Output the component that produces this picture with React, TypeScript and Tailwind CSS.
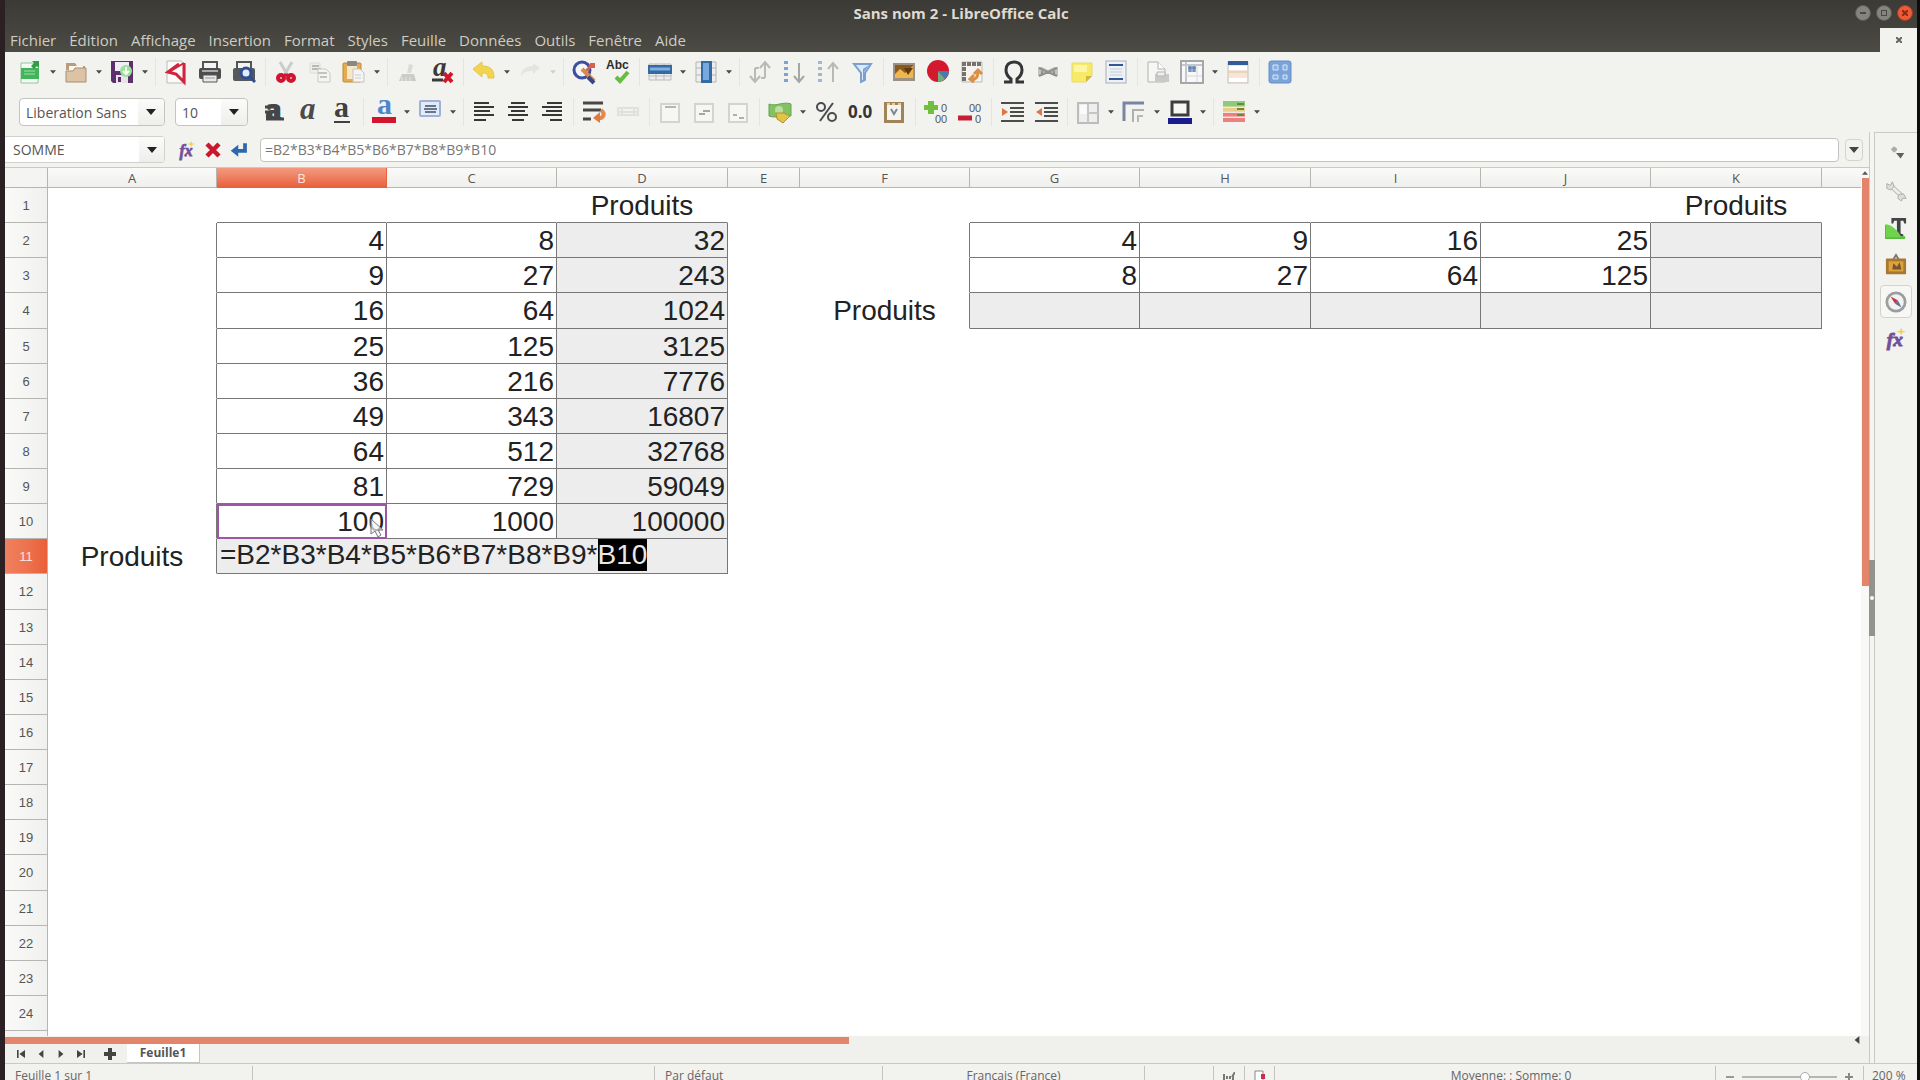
import React from 'react';
import clsx from 'clsx';

type IconName = keyof typeof icons;

type Tool =
  | { kind: 'icon'; icon: IconName; label: string; menu?: boolean; faded?: boolean }
  | { kind: 'separator' };

const tool = (icon: IconName, label: string, menu = false, faded = false): Tool => ({
  kind: 'icon', icon, label, menu, faded,
});
const separator: Tool = { kind: 'separator' };

// All drawings share a 24 x 24 grid
const icons = {
  newSheet: (
    <>
      <path d="M3 3h12l5 3v17H3z" fill="#f4fbf4" stroke="#8fc79a" />
      <rect x="3" y="8" width="18" height="11" fill="#43b45b" />
      <path d="M6 11h11M6 14h11" stroke="#9ee0ab" />
      <path d="M14 1h7v7l-2-2-3 3-3-3 3-3z" fill="#2f9e44" />
    </>
  ),
  open: (
    <>
      <path d="M2 3h9l2 3h8v4H2z" fill="#b79c7f" />
      <path d="M5 6h14v8H5z" fill="#faf6f0" />
      <path d="M2 11h7l2-3h11v14H2z" fill="#dcc3a3" stroke="#a98e70" />
    </>
  ),
  save: (
    <>
      <path d="M1 1h22v22H3l-2-2z" fill="#5d2f6d" />
      <rect x="5" y="2" width="14" height="9" fill="#f3eef5" />
      <rect x="6" y="15" width="12" height="8" fill="#e8e2ea" />
      <rect x="8" y="17" width="3" height="5" fill="#5d2f6d" />
      <circle cx="16" cy="11" r="6" fill="#9be09b" />
      <path d="M16 7v6m-3-2 3 3 3-3" stroke="#f4fff4" strokeWidth="2" fill="none" />
    </>
  ),
  pdf: (
    <>
      <path d="M3 1h14l4 4v18H3z" fill="#fafafa" stroke="#bbb" />
      <path d="M20 3v19L12 14 4 12 15 4" fill="none" stroke="#d2233c" strokeWidth="3" />
      <path d="M5 12 20 3" stroke="#d2233c" strokeWidth="2" />
    </>
  ),
  print: (
    <>
      <path d="M5 2h14v7H5z" fill="#f3f3f3" stroke="#555" strokeWidth="2" />
      <rect x="1" y="8" width="22" height="11" rx="2" fill="#4b4d4e" />
      <path d="M4 11h16" stroke="#aaa" strokeWidth="2" />
      <path d="M5 15h14v7H5z" fill="#e9e9e9" stroke="#555" />
      <path d="M7 18h10" stroke="#999" />
    </>
  ),
  preview: (
    <>
      <path d="M5 2h14v7H5z" fill="#f3f3f3" stroke="#555" strokeWidth="2" />
      <rect x="1" y="8" width="22" height="13" rx="2" fill="#55585c" />
      <circle cx="14" cy="13" r="5" fill="#e2ecfa" stroke="#304f91" strokeWidth="3" />
      <path d="m18 17 5 5" stroke="#304f91" strokeWidth="3" />
    </>
  ),
  cut: (
    <>
      <path d="m6 2 7 12M18 2l-7 12" stroke="#cbcccb" strokeWidth="3" />
      <circle cx="7" cy="18" r="3" fill="#f3c2c7" stroke="#cf1630" strokeWidth="4" />
      <circle cx="17" cy="18" r="3" fill="#f3c2c7" stroke="#cf1630" strokeWidth="4" />
      <path d="M10 15h4" stroke="#cf1630" strokeWidth="3" />
    </>
  ),
  copy: (
    <>
      <path d="M2 3h10v10H2z" fill="#eee" stroke="#dcdcda" />
      <path d="M4 6h7M4 9h9" stroke="#b8b8b6" strokeWidth="2" />
      <path d="M10 9h8l4 4v9H10z" fill="#f4f4f3" stroke="#c8c8c6" />
      <path d="M10 13h9M12 17h7" stroke="#c3c3c1" strokeWidth="2" />
    </>
  ),
  paste: (
    <>
      <rect x="1" y="3" width="18" height="19" rx="1" fill="#e3ac52" stroke="#c28a35" />
      <rect x="5" y="1" width="10" height="5" rx="1" fill="#888" />
      <rect x="5" y="6" width="10" height="13" fill="#f7e7c9" />
      <path d="M11 9h7l4 4v9H11z" fill="#f4f4f4" stroke="#c3c3c1" />
      <path d="M13 15h6M13 18h6" stroke="#ccc" />
    </>
  ),
  clone: (
    <>
      <path d="m13 4 4 1-2 8h-4z" fill="#dadad8" />
      <path d="M6 14h12l2 7H3z" fill="#cbcbc9" />
      <path d="M6 21v-4m4 4v-4m4 4v-4" stroke="#e6e6e4" />
    </>
  ),
  clear: (
    <>
      <text x="3" y="16" fontFamily="Liberation Serif" fontSize="27" fontWeight="700" fontStyle="italic" fill="#3a3a3a">a</text>
      <path d="M2 20h11" stroke="#3a3a3a" strokeWidth="3" />
      <path d="m14 13 8 9m0-9-8 9" stroke="#d0182c" strokeWidth="4" />
    </>
  ),
  undo: (
    <path d="M1 9 10 2v4c8 0 12 3 12 12h-6c0-4-2-5-6-5v4z" fill="#f3d44e" stroke="#e3c548" />
  ),
  redo: (
    <path d="M22 8 15 3v3C8 6 3 9 3 16c3-4 6-5 12-5v3z" fill="#e4e4e1" />
  ),
  find: (
    <>
      <circle cx="10" cy="10" r="8" fill="#f5f6fc" stroke="#3e4f9f" strokeWidth="3" />
      <path d="M18 3h5v5h-4l-6 6-2-2 6-6z" fill="#d9604c" />
      <path d="m10 9 12 12" stroke="#d88a4a" strokeWidth="4" />
      <path d="m16 17 6 6" stroke="#37458b" strokeWidth="4" />
    </>
  ),
  spell: (
    <>
      <text x="0" y="9" fontFamily="Liberation Sans" fontSize="12" fontWeight="700" fill="#2c2c2c">Abc</text>
      <path d="m10 17 4 4 8-9" fill="none" stroke="#67bd3e" strokeWidth="4" />
    </>
  ),
  row: (
    <>
      <path d="M1 4h22v16H1zM1 16h22M8 4v16M16 4v16" fill="#eee" stroke="#bbb" />
      <rect x="0" y="5" width="24" height="9" fill="#356ba5" />
      <path d="M2 9h20" stroke="#7faee0" strokeWidth="3" />
    </>
  ),
  column: (
    <>
      <path d="M2 2h20v20H2zM2 8h20M2 15h20" fill="#eee" stroke="#b5b5b5" />
      <rect x="7" y="1" width="11" height="22" fill="#356ba5" />
      <rect x="9" y="3" width="6" height="17" fill="#78a9de" />
    </>
  ),
  sort: (
    <path d="M7 8v13m-5-5 5 6 5-6M7 8h4M17 18V3m-5 5 5-6 5 6M17 18h-4" fill="none" stroke="#b9b9b7" strokeWidth="2" />
  ),
  sortAsc: (
    <>
      <path d="M4 1v22" stroke="#7ba3d3" strokeWidth="4" strokeDasharray="3 3" />
      <path d="M17 3v18m-5-5 5 6 5-6" fill="none" stroke="#a6a6a4" strokeWidth="2" />
    </>
  ),
  sortDesc: (
    <>
      <path d="M4 1v22" stroke="#a3b7cd" strokeWidth="4" strokeDasharray="3 3" />
      <path d="M17 22V4m-5 5 5-6 5 6" fill="none" stroke="#b8b8b6" strokeWidth="2" />
    </>
  ),
  filter: (
    <>
      <path d="M4 4h17l-6 9v7l-4 2v-9z" fill="#dbe9fa" stroke="#7b9fd0" strokeWidth="2" />
      <path d="m14 12 5-7-6 4v12l2-1z" fill="#7b9fd0" />
    </>
  ),
  image: (
    <>
      <rect x="1" y="3" width="22" height="18" fill="#9c9183" />
      <path d="M3 5h18v13H3z" fill="#8b5a1d" />
      <path d="M3 14 8 9l5 4 8-7v12H3z" fill="#efb949" />
      <path d="M12 8h9l-5 7z" fill="#5f3b16" />
    </>
  ),
  chart: (
    <>
      <circle cx="12" cy="11" r="11" fill="#d3192e" />
      <path d="M12 11h11a11 11 0 0 1-4 8z" fill="#477bb8" />
      <path d="m12 11 7 8a11 11 0 0 1-7 3z" fill="#6eae80" />
    </>
  ),
  pivot: (
    <>
      <path d="M2 2h20v20H2z" fill="#f6f4f0" stroke="#bbb" />
      <path d="M2 4h20M4 2v20" stroke="#77726c" strokeWidth="4" strokeDasharray="4 1" />
      <path d="M11 19c5 1 7-2 7-7m-4 2 4-4 4 4M14 15l-4 4 4 3" fill="none" stroke="#dc9044" strokeWidth="3" />
    </>
  ),
  omega: (
    <path
      d="M2 22h7v-3C5 16 4 14 4 10c0-5 3-8 8-8s8 3 8 8c0 4-1 6-5 9v3h7"
      fill="none" stroke="#333537" strokeWidth="3"
    />
  ),
  link: (
    <>
      <path d="M2 7h4l6 3 6-3h4v9h-4l-6-3-6 3H2z" fill="#c3c3c1" />
      <path d="m3 8 9 4-9 4M21 8l-9 4 9 4M6 9v6M18 9v6" fill="none" stroke="#8f8f8d" strokeWidth="2" />
    </>
  ),
  comment: (
    <>
      <path d="M2 3h20v13l-6 6H2z" fill="#f7ea68" stroke="#e8da62" />
      <path d="M16 22v-6h6z" fill="#cdb93b" />
      <path d="M4 5h13v7H4z" fill="#fcf5a1" />
    </>
  ),
  headerFooter: (
    <>
      <rect x="2" y="1" width="20" height="22" fill="#edf1f7" stroke="#a7aeb9" />
      <path d="M5 5h14M5 19h14" stroke="#35568f" strokeWidth="2" />
      <path d="M6 9h12M6 12h12M6 15h12" stroke="#c6cad1" />
    </>
  ),
  printArea: (
    <>
      <path d="M2 2h10l7 7v13H2z" fill="#f6f6f5" stroke="#b1b1af" />
      <path d="M12 2v7h7" fill="#fff" stroke="#b1b1af" />
      <path d="M9 14h14v8H9z" fill="#c9c9c7" />
      <path d="M11 12h8v4h-8z" fill="#eee" stroke="#b5b5b3" />
    </>
  ),
  freeze: (
    <>
      <rect x="1" y="1" width="22" height="22" fill="#f8f8f8" stroke="#a4a6aa" strokeWidth="2" />
      <path d="M2 5h20M6 2v20" stroke="#c3c6cb" strokeWidth="2" />
      <path d="M17 5v17M6 16h16" stroke="#d6d8db" />
      <path d="M8 6h8v6H8z" fill="#9db0d0" />
      <path d="M8 8h8M10 6v6m4-6v6" stroke="#5676ad" />
    </>
  ),
  split: (
    <>
      <rect x="2" y="2" width="20" height="21" fill="#f5e6d7" stroke="#c4c4c4" />
      <path d="M2 3h20" stroke="#345c97" strokeWidth="4" />
      <path d="M3 8h18M3 20h18" stroke="#fff" strokeWidth="4" />
      <path d="M2 12h20" stroke="#e2c3a5" />
    </>
  ),
  controls: (
    <>
      <rect x="1" y="1" width="22" height="22" rx="2" fill="#7aa3d8" stroke="#6690c7" />
      <path d="M5 5h5v5H5zM15 5h4v5h-4zM5 15h5v4H5zM15 15h4v4h-4z" fill="#86b0e2" stroke="#d7e6f8" />
    </>
  ),
  bold: (
    <>
      <text x="4" y="19" fontFamily="Liberation Serif" fontSize="30" fontWeight="700" fill="#454647" stroke="#454647" strokeWidth="2">a</text>
      <path d="M3 7h9M3 12h8M4 17h7M4 19h18" stroke="#454647" strokeWidth="3" />
    </>
  ),
  italic: <text x="4" y="19" fontFamily="Liberation Serif" fontSize="31" fontWeight="700" fontStyle="italic" fill="#4a4b4c">a</text>,
  underline: (
    <>
      <text x="4" y="17" fontFamily="Liberation Serif" fontSize="30" fontWeight="700" fill="#3f4041">a</text>
      <path d="M4 22h16" stroke="#3f4041" strokeWidth="2" />
    </>
  ),
  fontColor: (
    <>
      <text x="5" y="14" fontFamily="Liberation Serif" fontSize="30" fontWeight="700" fill="#4f86cb">a</text>
      <path d="M0 20h24" stroke="#d2142c" strokeWidth="6" />
    </>
  ),
  highlight: (
    <>
      <rect x="2" y="1" width="20" height="15" rx="1" fill="#e3ebf7" stroke="#9cb2d6" strokeWidth="2" />
      <path d="M7 6h11M6 9h13M7 12h11" stroke="#66748e" strokeWidth="2" />
    </>
  ),
  alignLeft: <path d="M2 3h15M2 7h20M2 11h16M2 15h20M2 20h12" stroke="#353636" strokeWidth="2" />,
  alignCenter: <path d="M5 3h14M2 7h20M5 11h14M2 15h20M6 20h12" stroke="#353636" strokeWidth="2" />,
  alignRight: <path d="M7 3h15M2 7h20M6 11h16M2 15h20M10 20h12" stroke="#353636" strokeWidth="2" />,
  wrap: (
    <>
      <path d="M1 3h20M1 10h18M1 19h8" stroke="#474747" strokeWidth="3" />
      <path d="M19 10c5 4 2 9-3 8" fill="none" stroke="#df8b49" strokeWidth="4" />
      <path d="m18 12-7 6 7 5z" fill="#dd7941" />
    </>
  ),
  merge: <path d="M2 8h20v7H2zM2 12h20M6 9v5M18 9v5" fill="none" stroke="#e0e0de" strokeWidth="2" />,
  alignTop: (
    <>
      <rect x="3" y="4" width="18" height="18" fill="#f6f6f4" stroke="#d3d3d1" strokeWidth="2" />
      <path d="M7 7h11" stroke="#b5b5b3" strokeWidth="2" />
    </>
  ),
  alignMiddle: (
    <>
      <rect x="3" y="4" width="18" height="18" fill="#f6f6f4" stroke="#d3d3d1" strokeWidth="2" />
      <path d="M11 11h7M7 14h6" stroke="#a5a5a3" strokeWidth="2" />
    </>
  ),
  alignBottom: (
    <>
      <rect x="3" y="4" width="18" height="18" fill="#f6f6f4" stroke="#d3d3d1" strokeWidth="2" />
      <path d="M7 15h4m2 3h5" stroke="#b0b0ae" strokeWidth="2" />
    </>
  ),
  currency: (
    <>
      <path d="M1 4c7 3 14-3 22 0v12c-7-2-14 3-22 0z" fill="#83c164" stroke="#66a350" />
      <circle cx="11" cy="10" r="4" fill="#b9df9e" />
      <path d="M8 13h8l6 3-7 7-6-4z" fill="#dfc448" stroke="#b0922b" />
    </>
  ),
  percent: (
    <>
      <circle cx="7" cy="7" r="4" fill="none" stroke="#494b4d" strokeWidth="2" />
      <circle cx="18" cy="17" r="4" fill="none" stroke="#494b4d" strokeWidth="2" />
      <path d="M19 3 6 21" stroke="#494b4d" strokeWidth="2" />
    </>
  ),
  number: <text x="0" y="18" fontFamily="Open Sans" fontSize="17" fontWeight="700" fill="#343536">0.0</text>,
  date: (
    <>
      <rect x="2" y="2" width="20" height="21" fill="#a08358" />
      <rect x="5" y="5" width="14" height="15" fill="#f5f4ee" />
      <path d="m9 9 3 5 3-5" fill="none" stroke="#7d8896" strokeWidth="2" />
      <path d="M5 4h3m2 0h3m3 0h3" stroke="#e2cda6" strokeWidth="2" />
    </>
  ),
  addDecimal: (
    <>
      <path d="M4 1h6v4h4v5h-4v4H4v-4H0V5h4z" fill="#71bf3c" />
      <text x="17" y="12" fontFamily="Liberation Sans" fontSize="11" fill="#555">0</text>
      <text x="11" y="23" fontFamily="Liberation Sans" fontSize="11" fill="#555">00</text>
    </>
  ),
  removeDecimal: (
    <>
      <path d="M0 18h14" stroke="#c51e35" strokeWidth="5" />
      <text x="11" y="12" fontFamily="Liberation Sans" fontSize="11" fill="#555">00</text>
      <text x="17" y="23" fontFamily="Liberation Sans" fontSize="11" fill="#555">0</text>
    </>
  ),
  indent: (
    <>
      <path d="M1 3h23M10 8h14M10 12h14M10 16h14M1 21h23" stroke="#4b4c4c" strokeWidth="2" />
      <path d="m2 8 6 4-6 4z" fill="#e17544" />
    </>
  ),
  outdent: (
    <>
      <path d="M1 3h23M10 8h14M10 12h14M10 16h14M1 21h23" stroke="#4b4c4c" strokeWidth="2" />
      <path d="m8 8-6 4 6 4z" fill="#e17544" />
    </>
  ),
  borders: (
    <>
      <rect x="2" y="3" width="20" height="20" fill="#eee" stroke="#bcbcba" strokeWidth="2" />
      <path d="M12 4v19M12 13h10" stroke="#c6c6c4" strokeWidth="2" />
      <path d="M4 5h7v9H4z" fill="#fafafa" />
    </>
  ),
  borderStyle: (
    <>
      <path d="M2 21V3h20" fill="none" stroke="#7c84a3" strokeWidth="3" />
      <path d="M11 22V10h11" fill="none" stroke="#b0b0ae" strokeWidth="2" />
      <path d="M16 22v-6h5" fill="none" stroke="#b8b8b6" strokeWidth="2" />
    </>
  ),
  borderColor: (
    <>
      <rect x="4" y="2" width="16" height="13" fill="#f6f6f4" stroke="#3c3d3f" strokeWidth="3" />
      <path d="M0 21h24" stroke="#191b90" strokeWidth="6" />
    </>
  ),
  conditional: (
    <>
      <path d="M1 4h22" stroke="#8ecb79" strokeWidth="6" />
      <path d="M1 10h22" stroke="#e9cd8a" strokeWidth="4" />
      <path d="M1 15h22M1 20h22" stroke="#ea8080" strokeWidth="4" />
      <path d="M1 7h22M1 12h22M1 17h22" stroke="#f7ddd0" />
      <path d="M15 4h7M15 9h7M15 15h7" stroke="#6a8a3d" strokeWidth="2" />
    </>
  ),
  fx: (
    <>
      <text x="2" y="20" fontFamily="Liberation Serif" fontSize="21" fontWeight="700" fontStyle="italic" fill="#73509a" stroke="#73509a">fx</text>
      <path d="m18 0 1 3 4 1-4 1-1 3-2-3-4-1 4-1z" fill="#efd550" />
    </>
  ),
  cancel: <path d="m4 4 16 16M20 4 4 20" stroke="#c9182d" strokeWidth="6" />,
  accept: (
    <>
      <path d="M20 3v10H8" fill="none" stroke="#2d68ad" strokeWidth="5" />
      <path d="M11 5v16l-10-8z" fill="#2d68ad" />
    </>
  ),
  settings: (
    <>
      <path d="M7 7h6m-3-3v6" stroke="#aaa" strokeWidth="3" />
      <path d="M12 11h9l-4 6z" fill="#5d5f61" />
    </>
  ),
  wrench: (
    <>
      <path d="M6 6 19 18" stroke="#b8b8b6" strokeWidth="5" />
      <path d="M6 6 19 18" stroke="#eeeeec" strokeWidth="3" />
      <path d="M2 4v5l4 2 4-4-2-5-2 4zM23 20l-3-5-5 1-1 4 4 3 1-3z" fill="#dededc" stroke="#a9a9a7" />
    </>
  ),
  styles: (
    <>
      <path d="M0 8 13 21h9v3H0z" fill="#58bd3d" />
      <path d="M7 1h16v6h-2l-1-3h-3v14l3 1v2H10v-2l3-1V4h-3L9 7H7z" fill="#424547" />
      <path d="M1 8c7 1 12 6 17 14H1z" fill="#70d34d" />
    </>
  ),
  gallery: (
    <>
      <path d="m9 6 3-5 3 5" fill="none" stroke="#777" strokeWidth="2" />
      <rect x="1" y="5" width="22" height="17" rx="1" fill="#a87730" />
      <rect x="4" y="8" width="16" height="11" fill="#dfa33c" />
      <path d="m8 17 1-7 4 4 3-5 2 8z" fill="#74552e" />
    </>
  ),
  navigator: (
    <>
      <circle cx="12" cy="12" r="10" fill="#f2f2f1" stroke="#9b9d9f" strokeWidth="3" />
      <path d="m6 6 8 4-3 4z" fill="#c9344a" />
      <path d="m18 18-4-8-3 4z" fill="#5b7092" />
    </>
  ),
};

const Icon = ({ name, className = 'size-6' }: { name: IconName; className?: string }) => (
  <svg viewBox="0 0 24 24" className={clsx('overflow-visible', className)} aria-hidden="true">{icons[name]}</svg>
);

const Caret = ({ className = 'h-1 w-2' }: { className?: string }) => (
  <svg viewBox="0 0 10 6" className={className} aria-hidden="true">
    <path d="M0 0h10L5 6z" fill="currentColor" />
  </svg>
);

const menus = [
  'Fichier', 'Édition', 'Affichage', 'Insertion', 'Format', 'Styles',
  'Feuille', 'Données', 'Outils', 'Fenêtre', 'Aide',
];

const standardTools: Tool[] = [
  tool('newSheet', 'Nouveau', true), tool('open', 'Ouvrir', true), tool('save', 'Enregistrer', true),
  separator,
  tool('pdf', 'Exporter au format PDF'), tool('print', 'Imprimer'), tool('preview', 'Aperçu'),
  separator,
  tool('cut', 'Couper'), tool('copy', 'Copier'), tool('paste', 'Coller', true),
  separator,
  tool('clone', 'Cloner le formatage'), tool('clear', 'Effacer le formatage'),
  separator,
  tool('undo', 'Annuler', true), tool('redo', 'Rétablir', true, true),
  separator,
  tool('find', 'Rechercher'), tool('spell', 'Orthographe'),
  separator,
  tool('row', 'Ligne', true), tool('column', 'Colonne', true),
  separator,
  tool('sort', 'Trier'), tool('sortAsc', 'Tri croissant'), tool('sortDesc', 'Tri décroissant'), tool('filter', 'AutoFiltre'),
  separator,
  tool('image', 'Image'), tool('chart', 'Diagramme'), tool('pivot', 'Table dynamique'),
  separator,
  tool('omega', 'Caractères spéciaux'), tool('link', 'Hyperlien'), tool('comment', 'Commentaire'),
  tool('headerFooter', 'En-têtes et pieds de page'),
  separator,
  tool('printArea', "Zone d'impression"), tool('freeze', 'Fixer lignes et colonnes', true), tool('split', 'Scinder'),
  separator,
  tool('controls', 'Fonctions de dessin'),
];

const formatTools: Tool[] = [
  tool('bold', 'Gras'), tool('italic', 'Italique'), tool('underline', 'Souligner'),
  separator,
  tool('fontColor', 'Couleur de police', true), tool('highlight', "Couleur d'arrière-plan", true),
  separator,
  tool('alignLeft', 'Aligner à gauche'), tool('alignCenter', 'Centrer'), tool('alignRight', 'Aligner à droite'),
  separator,
  tool('wrap', 'Renvoi à la ligne'), tool('merge', 'Fusionner'),
  separator,
  tool('alignTop', 'Aligner en haut'), tool('alignMiddle', 'Centrer verticalement'), tool('alignBottom', 'Aligner en bas'),
  separator,
  tool('currency', 'Monnaie', true), tool('percent', 'Pourcentage'), tool('number', 'Nombre'), tool('date', 'Date'),
  separator,
  tool('addDecimal', 'Ajouter une décimale'), tool('removeDecimal', 'Supprimer une décimale'),
  separator,
  tool('indent', 'Augmenter le retrait'), tool('outdent', 'Diminuer le retrait'),
  separator,
  tool('borders', 'Bordures', true), tool('borderStyle', 'Style de bordure', true), tool('borderColor', 'Couleur de bordure', true),
  separator,
  tool('conditional', 'Formatage conditionnel', true),
];

const columns = [
  { name: 'A', width: 'w-[169px]' },
  { name: 'B', width: 'w-[170px]' },
  { name: 'C', width: 'w-[170px]' },
  { name: 'D', width: 'w-[171px]' },
  { name: 'E', width: 'w-[72px]' },
  { name: 'F', width: 'w-[170px]' },
  { name: 'G', width: 'w-[170px]' },
  { name: 'H', width: 'w-[171px]' },
  { name: 'I', width: 'w-[170px]' },
  { name: 'J', width: 'w-[170px]' },
  { name: 'K', width: 'w-[171px]' },
];

const cells: Record<string, string> = {
  D1: 'Produits', K1: 'Produits', F4: 'Produits', A11: 'Produits',
  B2: '4', C2: '8', D2: '32',
  B3: '9', C3: '27', D3: '243',
  B4: '16', C4: '64', D4: '1024',
  B5: '25', C5: '125', D5: '3125',
  B6: '36', C6: '216', D6: '7776',
  B7: '49', C7: '343', D7: '16807',
  B8: '64', C8: '512', D8: '32768',
  B9: '81', C9: '729', D9: '59049',
  B10: '100', C10: '1000', D10: '100000',
  G2: '4', H2: '9', I2: '16', J2: '25',
  G3: '8', H3: '27', I3: '64', J3: '125',
};

const inBox = (col: number, row: number) =>
  (col >= 1 && col <= 3 && row >= 2 && row <= 11) || (col >= 6 && col <= 10 && row >= 2 && row <= 4);

const isShaded = (col: number, row: number) =>
  inBox(col, row) && (col === 3 || col === 10 || row === 11 || (col >= 6 && row === 4));

const ToolButtons = ({ tools }: { tools: Tool[] }) => (
  <>
    {tools.map((t, i) =>
      t.kind === 'separator' ? (
        <span key={i} className="flex h-7 w-2 shrink-0 justify-center">
          <span className="w-px bg-[#e4e4e1]" />
        </span>
      ) : (
        <span key={i} className="flex shrink-0 items-center">
          <button type="button" aria-label={t.label} className="flex h-7 w-[34px] items-center justify-center">
            <Icon name={t.icon} />
          </button>
          {t.menu && (
            <button
              type="button"
              aria-label={`${t.label} : options`}
              className={clsx('flex h-7 w-3 items-center justify-center', t.faded ? 'text-[#cfcfcc]' : 'text-[#4a4a4a]')}
            >
              <Caret className="h-1 w-1.5" />
            </button>
          )}
        </span>
      ),
    )}
  </>
);

const Combo = ({ label, value, className }: { label: string; value: string; className: string }) => (
  <div className={clsx('relative flex h-7 shrink-0 items-center rounded border border-[#c3c3bf] bg-white', className)}>
    <select aria-label={label} className="h-full w-full appearance-none rounded bg-transparent pr-[26px] pl-1.5 text-[14px] text-[#555]">
      <option>{value}</option>
    </select>
    <span className="pointer-events-none absolute inset-y-0 right-0 flex w-[26px] items-center justify-center rounded-r bg-gradient-to-b from-[#fbfbfa] to-[#eeeeeb] text-[#222]">
      <Caret className="h-1.5 w-2.5" />
    </span>
  </div>
);

const TitleBar = () => (
  <header className="shrink-0 bg-gradient-to-b from-[#3b3a36] to-[#4b4a43] text-[#dfdbd2]">
    <div className="relative flex h-7 items-center justify-center">
      <h1 className="pb-0.5 text-[15px] font-bold">Sans nom 2 - LibreOffice Calc</h1>
      <div className="absolute top-[5px] right-1 flex gap-[5px]">
        <button type="button" aria-label="Réduire" className="flex size-4 items-center justify-center rounded-full border border-[#5c5b56] bg-[#85847e]">
          <span className="h-0.5 w-1.5 bg-[#4b4a45]" />
        </button>
        <button type="button" aria-label="Agrandir" className="flex size-4 items-center justify-center rounded-full border border-[#5c5b56] bg-[#85847e]">
          <span className="h-1.5 w-1.5 border border-[#4b4a45]" />
        </button>
        <button type="button" aria-label="Fermer" className="flex size-4 items-center justify-center rounded-full border border-[#a33f22] bg-[#ee5a37]">
          <svg viewBox="0 0 6 6" className="size-1.5"><path d="m0 0 6 6m0-6-6 6" stroke="#8a2c14" strokeWidth="2" /></svg>
        </button>
      </div>
    </div>
    <div className="flex h-6 items-stretch justify-between">
      <nav className="flex items-center gap-[13px] pl-[5px] text-[15px] leading-6 text-[#cfccc3]">
        {menus.map(m => <button key={m} type="button" className="h-6">{m}</button>)}
      </nav>
      <button type="button" aria-label="Fermer le document" className="flex w-[37px] items-center justify-center bg-[#f2f2ef] text-[#666]">
        <svg viewBox="0 0 6 6" className="size-1.5"><path d="m0 0 6 6m0-6-6 6" stroke="currentColor" strokeWidth="2" /></svg>
      </button>
    </div>
  </header>
);

const FormulaBar = () => (
  <div className="flex h-9 shrink-0 items-center border-b border-[#c9c9c6]">
    <div className="flex h-[27px] w-40 items-center rounded-r border border-l-0 border-[#d0d0cd] bg-white">
      <input aria-label="Zone de nom" defaultValue="SOMME" className="h-full min-w-0 flex-1 pl-2 text-[14px] text-[#555] outline-none" />
      <button type="button" aria-label="Plages nommées" className="flex h-full w-[25px] items-center justify-center bg-gradient-to-b from-[#fbfbfa] to-[#eeeeeb] text-[#222]">
        <Caret className="h-1.5 w-2.5" />
      </button>
    </div>
    <div className="flex pr-2 pl-[9px]">
      <button type="button" aria-label="Assistant Fonctions" className="flex w-[26px] justify-center"><Icon name="fx" className="size-[18px]" /></button>
      <button type="button" aria-label="Annuler la saisie" className="flex w-[26px] justify-center"><Icon name="cancel" className="size-[18px]" /></button>
      <button type="button" aria-label="Accepter" className="flex w-[26px] justify-center"><Icon name="accept" className="size-[18px]" /></button>
    </div>
    <input
      aria-label="Ligne de saisie"
      defaultValue="=B2*B3*B4*B5*B6*B7*B8*B9*B10"
      className="h-6 min-w-0 flex-1 rounded border border-[#c3c3bf] bg-white px-1 text-[14px] text-[#777] outline-none"
    />
    <button type="button" aria-label="Étendre la barre de formule" className="mx-1.5 flex h-[22px] w-[18px] items-center justify-center rounded border border-[#d3d3d0] text-[#444]">
      <Caret className="h-1.5 w-2.5" />
    </button>
  </div>
);

const EditedCell = () => (
  <td colSpan={3} className="border-r border-b border-[#777] bg-[#ededed] p-0 align-top whitespace-nowrap">
    <div role="textbox" aria-label="B11" contentEditable suppressContentEditableWarning className="px-[3px] leading-8 outline-none">
      =B2*B3*B4*B5*B6*B7*B8*B9*<span className="inline-block bg-black text-[#e8e8e8]">B10</span>
    </div>
  </td>
);

const SheetRow = ({ row }: { row: number }) => (
  <tr>
    <th
      scope="row"
      className={clsx(
        'border-r border-b border-[#b5b5b2] px-0 pt-0.5 pb-0 text-center text-[13px] leading-8 font-normal',
        row === 11
          ? 'bg-gradient-to-r from-[#f0805f] via-[#ee7350] via-50% to-[#e95f38] text-[#fbe3da]'
          : 'bg-gradient-to-r from-[#fafaf9] to-[#f0f0ee] text-[#555]',
      )}
    >
      {row}
    </th>
    {columns.map((c, i) => {
      const id = `${c.name}${row}`;
      if (row === 11 && i === 1) return <EditedCell key={id} />;
      if (row === 11 && (i === 2 || i === 3)) return null;
      return (
        <td
          key={id}
          className={clsx(
            'relative border-r border-b px-0.5 pt-0.5 pb-0 leading-8',
            inBox(i, row) || inBox(i + 1, row) ? 'border-r-[#777]' : 'border-r-transparent',
            inBox(i, row) || inBox(i, row + 1) ? 'border-b-[#777]' : 'border-b-transparent',
            isShaded(i, row) && 'bg-[#ededed]',
            cells[id] === 'Produits' ? 'text-center' : 'text-right',
            id === 'B10' && 'outline-2 -outline-offset-2 outline-[#9c57a5]',
          )}
        >
          {cells[id]}
          {id === 'B10' && (
            <svg viewBox="0 0 14 20" className="absolute top-3.5 right-0.5 h-5 w-3.5" aria-hidden="true">
              <path d="M1 1v15l4-3 3 6 3-2-3-5h5z" fill="#f4f4f4" fillOpacity="0.7" stroke="#777" />
            </svg>
          )}
        </td>
      );
    })}
    <td />
  </tr>
);

const Sheet = () => (
  <table className="h-full w-full table-fixed border-separate border-spacing-0 bg-white font-['Liberation_Sans',sans-serif] text-[28px] text-[#222]">
    <colgroup>
      <col className="w-[43px]" />
      {columns.map(c => <col key={c.name} className={c.width} />)}
      <col />
    </colgroup>
    <thead className="font-['Open_Sans',sans-serif] text-[13px] text-[#555]">
      <tr className="h-5">
        <th className="border-r border-b border-[#b5b5b2] bg-[#f4f4f2] p-0" />
        {columns.map(c => (
          <th
            key={c.name}
            scope="col"
            className={clsx(
              'h-5 border-r border-b p-0 leading-4 font-medium',
              c.name === 'B'
                ? 'border-[#e5623d] bg-gradient-to-b from-[#f29a80] to-[#e9603a] text-[#fbe3da]'
                : 'border-[#b5b5b2] bg-gradient-to-b from-[#fafaf9] to-[#efefed]',
            )}
          >
            {c.name}
          </th>
        ))}
        <th className="border-b border-[#b5b5b2] bg-gradient-to-b from-[#fafaf9] to-[#efefed] p-0" />
      </tr>
    </thead>
    <tbody>
      {Array.from({ length: 24 }, (_, i) => <SheetRow key={i} row={i + 1} />)}
    </tbody>
    <tfoot>
      <tr className="h-[5px]">
        <td className="h-[5px] border-r border-[#b5b5b2] bg-[#f4f4f2] p-0" />
        <td colSpan={12} className="p-0" />
      </tr>
    </tfoot>
  </table>
);

const VerticalScroll = () => (
  <div className="flex w-2 shrink-0 flex-col items-center bg-[#f8f8f7]">
    <span className="flex h-2.5 items-center text-[#555]"><Caret className="h-1 w-1.5 rotate-180" /></span>
    <span className="h-[47%] w-[7px] bg-[#e3856a]" />
  </div>
);

const sheetNav = [
  { label: 'Première feuille', path: 'M1 0h2v10H1zM11 0v10L4 5z' },
  { label: 'Feuille précédente', path: 'M9 0v10L3 5z' },
  { label: 'Feuille suivante', path: 'M3 0v10l6-5z' },
  { label: 'Dernière feuille', path: 'M1 0v10l7-5zM9 0h2v10H9z' },
];

const SheetTabs = () => (
  <div className="flex h-[19px] shrink-0 items-stretch bg-[#f0f0ed] pl-1.5">
    {sheetNav.map(n => (
      <button key={n.label} type="button" aria-label={n.label} className="flex w-5 items-center justify-center">
        <svg viewBox="0 0 12 10" className="h-2 w-2.5 text-[#444]"><path d={n.path} fill="currentColor" /></svg>
      </button>
    ))}
    <button type="button" aria-label="Ajouter une feuille" className="ml-2 flex w-[22px] items-center justify-center">
      <svg viewBox="0 0 12 12" className="size-3"><path d="M6 0v12M0 6h12" stroke="#444" strokeWidth="4" /></svg>
    </button>
    <button type="button" className="ml-1.5 w-[73px] border-r border-b border-[#c5c5c2] bg-white text-[12px] leading-4 font-bold text-[#555]">
      Feuille1
    </button>
  </div>
);

const SideBar = () => (
  <aside className="flex w-12 shrink-0">
    <div className="flex w-1.5 flex-col items-center justify-center border-r border-l border-[#c9c9c6] bg-[#f4f4f2]">
      <button type="button" aria-label="Masquer le volet latéral" className="flex h-[76px] w-1.5 shrink-0 items-center justify-center bg-[#92928e]">
        <span className="size-1 rounded-full bg-white" />
      </button>
    </div>
    <div className="flex flex-1 flex-col items-center gap-1 border-t border-[#c9c9c6] bg-[#f2f2ef] pt-1">
      {(['settings', 'wrench', 'styles', 'gallery', 'navigator', 'fx'] as IconName[]).map(name => (
        <button
          key={name}
          type="button"
          aria-label={name}
          className={clsx(
            'flex h-[33px] w-8 items-center justify-center rounded-sm border',
            name === 'navigator' ? 'border-[#d2d2cf] bg-[#f7f7f5]' : 'border-transparent',
          )}
        >
          <Icon name={name} className="size-[22px]" />
        </button>
      ))}
    </div>
  </aside>
);

const StatusBar = () => (
  <footer className="h-[17px] shrink-0 overflow-hidden border-t border-[#c9c9c6] bg-[#f2f2ef]">
    <div className="flex h-6 items-stretch divide-x divide-[#c3c3c0] pt-0.5 text-[12px] leading-5 text-[#666]">
      <span className="w-[248px] pl-2.5">Feuille 1 sur 1</span>
      <span className="w-[402px]" />
      <span className="w-[228px] pl-2.5">Par défaut</span>
      <span className="w-[262px] text-center">Français (France)</span>
      <span className="w-[69px]" />
      <span className="flex w-[31px] justify-center pt-1.5">
        <svg viewBox="0 0 12 10" className="h-2.5 w-3"><path d="M1 2v7h9V4M4 4v3m3-3v3M9 5l3-5" fill="none" stroke="#777" strokeWidth="2" /></svg>
      </span>
      <span className="flex w-[30px] justify-center pt-1">
        <svg viewBox="0 0 12 14" className="h-3.5 w-3"><path d="M1 1h8v12H1z" fill="#fff" stroke="#888" /><path d="M7 4h4v5H7z" fill="#c5314a" /></svg>
      </span>
      <span className="flex-1 pl-8 text-center">Moyenne: ; Somme: 0</span>
      <span className="flex w-[148px] items-center gap-2 px-2.5">
        <button type="button" aria-label="Zoom arrière" className="h-0.5 w-2 shrink-0 bg-[#999]" />
        <input
          type="range"
          aria-label="Zoom"
          defaultValue={68}
          className="h-0.5 min-w-0 flex-1 appearance-none bg-[#b5b5b2] [&::-webkit-slider-thumb]:size-2.5 [&::-webkit-slider-thumb]:appearance-none [&::-webkit-slider-thumb]:rounded-full [&::-webkit-slider-thumb]:border [&::-webkit-slider-thumb]:border-[#aaa] [&::-webkit-slider-thumb]:bg-white"
        />
        <button type="button" aria-label="Zoom avant" className="shrink-0">
          <svg viewBox="0 0 8 8" className="size-2"><path d="M4 0v8M0 4h8" stroke="#888" strokeWidth="2" /></svg>
        </button>
      </span>
      <span className="w-[53px] pl-2">200 %</span>
    </div>
  </footer>
);

const App: React.FC = () => (
  <div className="flex h-screen overflow-hidden bg-[#f2f2ef] font-['Open_Sans',sans-serif]">
    <div className="w-[5px] shrink-0 bg-[#2b2024]" />
    <div className="flex min-w-0 flex-1 flex-col">
      <TitleBar />

      {/* Toolbars */}
      <div className="flex h-10 shrink-0 items-center pl-2">
        <ToolButtons tools={standardTools} />
      </div>
      <div className="flex h-10 shrink-0 items-center pl-3.5">
        <Combo label="Nom de police" value="Liberation Sans" className="mr-2.5 w-[146px]" />
        <Combo label="Taille de police" value="10" className="mr-[9px] w-[73px]" />
        <ToolButtons tools={formatTools} />
      </div>

      {/* Sheet and side bar */}
      <div className="flex min-h-0 flex-1">
        <div className="flex min-w-0 flex-1 flex-col">
          <FormulaBar />
          <div className="flex min-h-0 flex-1">
            <div className="min-w-0 flex-1 overflow-hidden">
              <Sheet />
            </div>
            <VerticalScroll />
          </div>
          <div className="flex h-2 shrink-0 items-center justify-between bg-[#f0f0ed] pr-2">
            <span className="h-[7px] w-5/11 bg-[#e3856a]" />
            <Caret className="h-1.5 w-2 rotate-90 text-[#444]" />
          </div>
          <SheetTabs />
        </div>
        <SideBar />
      </div>

      <StatusBar />
    </div>
    <div className="w-[3px] shrink-0 bg-[#0d0d0d]" />
  </div>
);

export default App;
